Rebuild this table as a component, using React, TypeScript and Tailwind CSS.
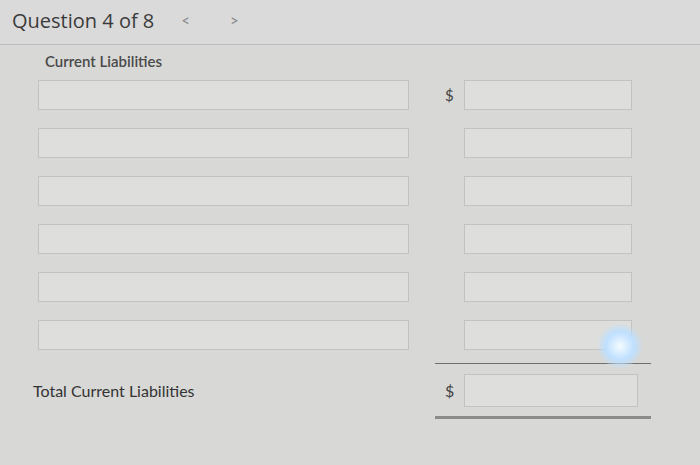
const rows = [0, 1, 2, 3, 4, 5];

function Box({ className = '' }: { className?: string }) {
  return <div className={`h-[30px] border border-[#c2c2c0] bg-[#dededc] ${className}`} />;
}

export default function App() {
  return (
    <div className="relative w-[700px] h-[465px] overflow-hidden bg-[#d8d8d6] text-[#333] font-['Lato','Open_Sans',sans-serif]">
      <header className="h-[45px] flex items-center pl-[12px] pb-[3px] bg-[#dadada] border-b border-[#bcbcbc]">
        <span className="text-[20px] text-[#3a3a3a] font-['Open_Sans',sans-serif]">Question 4 of 8</span>
        <span className="ml-[27px] text-[15px] text-[#888]">&lt;</span>
        <span className="ml-[40px] text-[15px] text-[#888]">&gt;</span>
      </header>

      <div className="pl-[38px]">
        <div className="pl-[7px] pt-[5px] h-[35px] text-[15px] font-semibold text-[#4a4a4a]">Current Liabilities</div>

        <div className="flex flex-col gap-[18px]">
          {rows.map((i) => (
            <div key={i} className="flex items-center">
              <Box className="w-[371px]" />
              <span className="w-[19px] ml-[36px] text-[15px] text-[#444]">{i === 0 ? '$' : ''}</span>
              <Box className="w-[168px]" />
            </div>
          ))}
        </div>

        <div className="ml-[397px] mt-[13px] w-[216px] h-px bg-[#6f6f6f]" />

        <div className="flex items-center mt-[10px]">
          <span className="-ml-[5px] w-[412px] text-[16px] text-[#333]">Total Current Liabilities</span>
          <span className="w-[19px] text-[16px] text-[#444]">$</span>
          <div className="w-[174px] h-[33px] border border-[#c2c2c0] bg-[#dededc]" />
        </div>

        <div className="ml-[397px] mt-[9px] w-[216px] h-[3px] bg-[#8a8c8c]" />
      </div>

      <div className="absolute left-[598px] top-[324px] w-[44px] h-[44px] rounded-full bg-[radial-gradient(circle,#f4fbff_0%,#bfe0ff_45%,rgba(190,220,250,0)_75%)]" />
    </div>
  );
}
